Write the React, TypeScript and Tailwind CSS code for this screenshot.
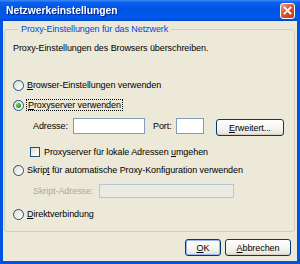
import React from 'react';

function Radio({ checked }: { checked?: boolean }) {
  return (
    <span className="w-[11px] h-[11px] shrink-0 rounded-full border border-[#1c5180] bg-[linear-gradient(135deg,#dcdcd7_0%,#f4f4f0_60%,#ffffff_100%)] flex items-center justify-center">
      {checked && <span className="w-[5px] h-[5px] rounded-full bg-[radial-gradient(circle_at_35%_35%,#6ee06e,#21a121_60%,#117611)]" />}
    </span>
  );
}

function Button({ children, w, isDefault }: { children: React.ReactNode; w: string; isDefault?: boolean }) {
  return (
    <div
      className={`${w} h-[17px] rounded-[3px] border border-[#003c74] bg-[linear-gradient(to_bottom,#ffffff_0%,#f4f3ee_60%,#e3e1d7_100%)] flex items-center justify-center text-black ${
        isDefault ? 'shadow-[inset_0_0_0_1px_#9db8ed]' : 'shadow-[inset_0_-1px_0_#d6d0c5]'
      }`}
    >
      {children}
    </div>
  );
}

export default function App() {
  return (
    <div
      className="w-[300px] h-[264px] bg-[#0054e3] flex flex-col overflow-hidden text-[9px] leading-[12px] tracking-[-0.08px] text-black"
      style={{ fontFamily: '"Liberation Sans", Arial, sans-serif' }}
    >
      {/* title bar */}
      <div className="h-[21px] shrink-0 flex items-center justify-between pl-[6px] pr-[5px] bg-[linear-gradient(to_bottom,#3d8cf7_0%,#0a5fef_12%,#0054e3_45%,#0058ee_85%,#0046c8_100%)]">
        <span className="text-white font-bold text-[10.3px] tracking-normal drop-shadow-[1px_1px_0_#0a2a8a]">
          Netzwerkeinstellungen
        </span>
        <div className="w-[15px] h-[16px] rounded-[3px] border border-white bg-[linear-gradient(135deg,#f0a08a_0%,#e2542c_45%,#c2380f_100%)] flex items-center justify-center">
          <svg width="9" height="9" viewBox="0 0 9 9">
            <path d="M1.5 1.5 L7.5 7.5 M7.5 1.5 L1.5 7.5" stroke="white" strokeWidth="1.8" strokeLinecap="square" />
          </svg>
        </div>
      </div>

      {/* body */}
      <div className="flex-1 mx-[3px] mb-[3px] bg-[#ece9d8] flex flex-col">
        <fieldset className="ml-[1px] mr-[2px] mt-[2px] border border-[#d0d0bf] rounded-[3px] pl-[8px] pr-[6px] pb-[11px]">
          <legend className="ml-[5px] px-[3px] text-[#0046d5]">Proxy-Einstellungen für das Netzwerk</legend>

          <div className="mt-[7px] h-[12px]">Proxy-Einstellungen des Browsers überschreiben.</div>

          <div className="mt-[25px] h-[12px] flex items-center gap-[3px]">
            <Radio />
            <span>
              <u>B</u>rowser-Einstellungen verwenden
            </span>
          </div>

          <div className="mt-[8px] h-[12px] flex items-center gap-[2px]">
            <Radio checked />
            <span className="border border-dotted border-black px-[1px] leading-[10px]">
              <u>P</u>roxyserver verwenden
            </span>
          </div>

          <div className="mt-[7px] h-[17px] flex items-start pl-[20px]">
            <span className="mt-[2px] w-[40px]">Adresse:</span>
            <div className="w-[72px] h-[16px] border border-[#7f9db9] bg-white" />
            <span className="mt-[2px] ml-[8px] w-[23px]">Port:</span>
            <div className="w-[28px] h-[16px] border border-[#7f9db9] bg-white" />
            <div className="ml-[12px] mt-[1px]">
              <Button w="w-[68px]">
                <span>
                  <u>E</u>rweitert...
                </span>
              </Button>
            </div>
          </div>

          <div className="mt-[11px] h-[12px] flex items-center gap-[4px] pl-[17px]">
            <span className="w-[10px] h-[10px] border border-[#1c5180] bg-[linear-gradient(135deg,#dcdcd7_0%,#f4f4f0_60%,#ffffff_100%)]" />
            <span>
              Proxyserver für lokale Adressen <u>u</u>mgehen
            </span>
          </div>

          <div className="mt-[6px] h-[12px] flex items-center gap-[3px]">
            <Radio />
            <span>
              Skrip<u>t</u> für automatische Proxy-Konfiguration verwenden
            </span>
          </div>

          <div className="mt-[8px] h-[14px] flex items-center pl-[20px]">
            <span className="w-[66px] text-[#aca899]">Skript-Adresse:</span>
            <div className="w-[135px] h-[14px] border border-[#b7c6d6] bg-[#ebeae3]" />
          </div>

          <div className="mt-[10px] h-[12px] flex items-center gap-[3px]">
            <Radio />
            <span>
              <u>D</u>irektverbindung
            </span>
          </div>
        </fieldset>

        <div className="mt-[7px] flex justify-end gap-[4px] pr-[6px]">
          <Button w="w-[36px]" isDefault>
            <span>
              <u>O</u>K
            </span>
          </Button>
          <Button w="w-[66px]">
            <span>
              <u>A</u>bbrechen
            </span>
          </Button>
        </div>
      </div>
    </div>
  );
}
